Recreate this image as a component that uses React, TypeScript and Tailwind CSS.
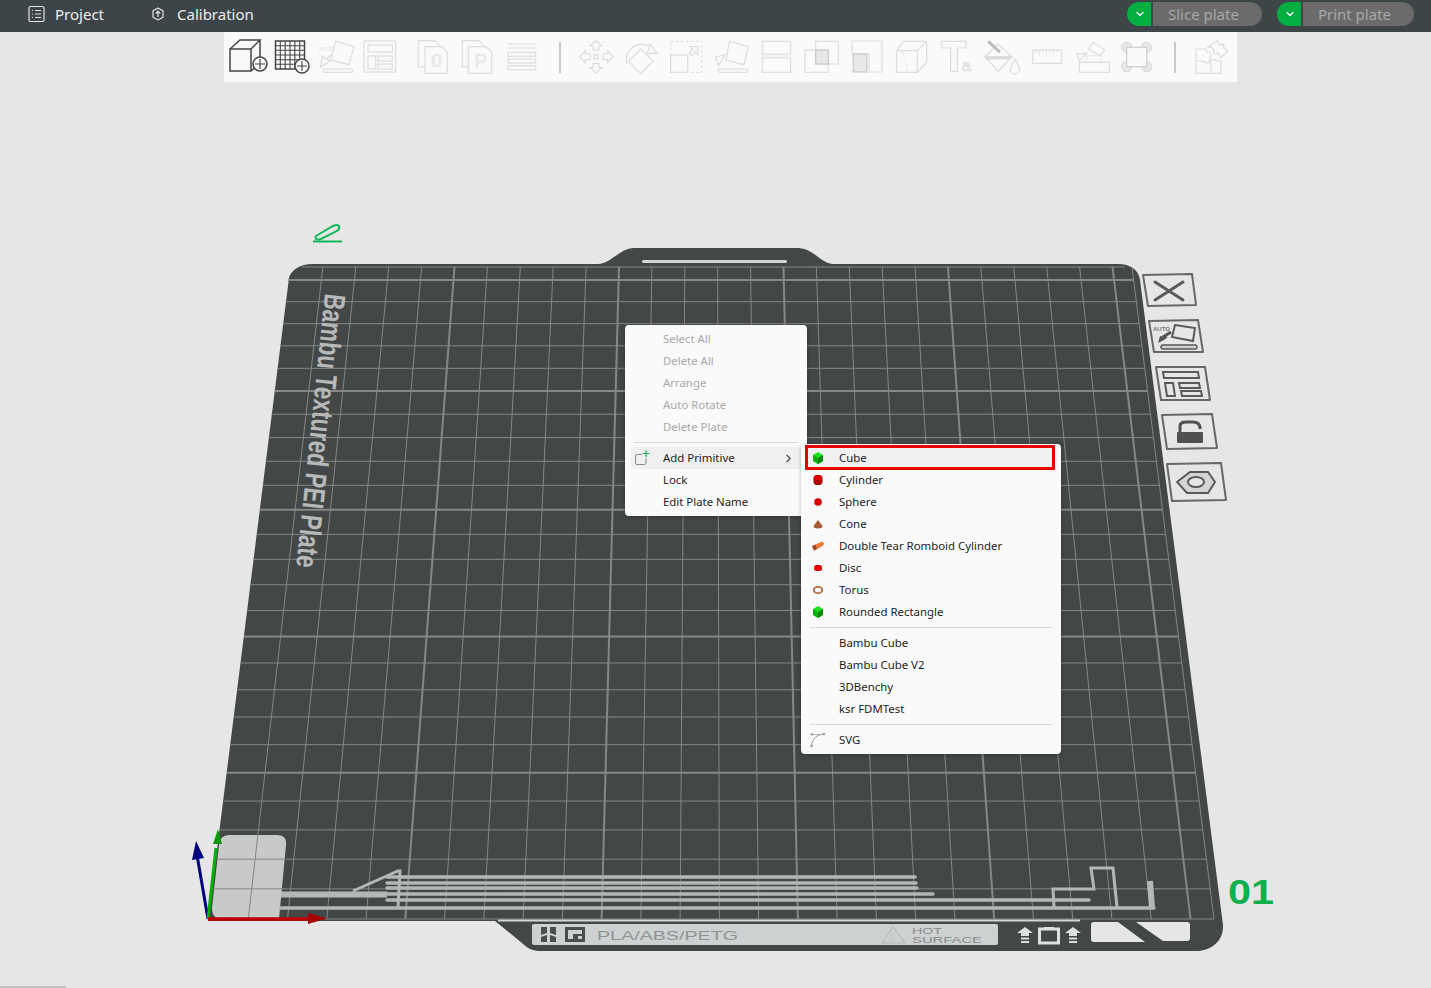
import type { ReactNode } from "react";
import { ChevronDown, ChevronRight } from "lucide-react";

const FONT = { fontFamily: '"Noto Sans", "Open Sans", sans-serif' };
const OFF = "#dcdcdc";
const DARK = "#444444";

// grid goes 25.6 cells each way (256mm plate), lines converge towards the top
const cellsX = Array.from({ length: 25 }, (_, i) => i + 1);
const cellsY = Array.from({ length: 25 }, (_, i) => i + 1);
const rowY = (k: number) => 919 - (30.38 * k) / (0.00755 * k + 1);

const FILAMENT = [
  [387, 915, 877],
  [387, 916, 883],
  [387, 917, 888],
  [387, 933, 894],
  [387, 1089, 900],
  [280, 1154, 908],
];

const Icon = ({ children }: { children: ReactNode }) => (
  <svg
    viewBox="0 0 44 46"
    className="h-[46px] w-[44px] shrink-0"
    fill="none"
    stroke={OFF}
    strokeWidth="1.2">
    {children}
  </svg>
);

const Hatch = ({ x, y, w, h }: { x: number; y: number; w: number; h: number }) => (
  <g>
    <rect x={x} y={y} width={w} height={h} fill="#f2f2f2" stroke="#c8c8c8" />
    {Array.from({ length: Math.floor((w + h) / 2.5) }, (_, i) => {
      const d = (i + 1) * 2.5;
      const x1 = x + Math.min(d, w);
      const y1 = y + Math.max(0, d - w);
      const x2 = x + Math.max(0, d - h);
      const y2 = y + Math.min(d, h);
      return <line key={i} x1={x1} y1={y1} x2={x2} y2={y2} stroke="#c6c6c6" strokeWidth="0.6" />;
    })}
  </g>
);

const Divider = ({ className }: { className: string }) => (
  <div className={`my-auto h-[31px] w-[2px] shrink-0 bg-[#c9c9c9] ${className}`} />
);

const Toolbar = () => (
  <div className="ml-[224px] flex h-[50px] w-[1013px] items-center bg-[#fafafa] pl-[2px]">
    <Icon>
      <g stroke={DARK} strokeWidth="1.5">
        <path d="M4 15H25V37H4ZM4 15L14 6H34L25 15M25 37L30 33M34 6V23" />
        <circle cx="34" cy="30" r="7" fill="#fafafa" />
        <path d="M29 30H39M34 25V35" strokeWidth="1.2" />
      </g>
    </Icon>
    <Icon>
      <g stroke={DARK} strokeWidth="1.1">
        <rect x="5.5" y="7" width="29" height="28" strokeWidth="1.5" />
        <path d="M10.3 7V35M15.2 7V35M20 7V35M24.8 7V35M29.7 7V35M5.5 11.7H34.5M5.5 16.3H34.5M5.5 21H34.5M5.5 25.7H34.5M5.5 30.3H34.5" />
        <circle cx="32" cy="32" r="7" fill="#fafafa" strokeWidth="1.4" />
        <path d="M27 32H37M32 27V37" />
      </g>
    </Icon>
    <Icon>
      <path d="M21.7 7L40 12.7L35 30.7L16.7 26Z" />
      <path d="M6.7 33L8 22L16 27Z" />
      <path d="M12 25L17 21" />
      <rect x="9.3" y="35" width="29.4" height="3.4" rx="1.7" />
      <text x="5" y="17" fontSize="5.5" fill={OFF} stroke="none" fontFamily="Liberation Sans">AUTO</text>
    </Icon>
    <Icon>
      <rect x="6" y="7" width="31.7" height="31" />
      <rect x="10" y="11" width="24.3" height="7" />
      <rect x="10" y="22" width="7.7" height="13" />
      <rect x="20" y="22" width="14.3" height="5" />
      <rect x="20" y="30" width="14.3" height="5" />
    </Icon>
    <div className="w-[9px] shrink-0" />
    <Icon>
      <path d="M14 33H7.3V6.7H24L29.7 12.7" />
      <path d="M14 12.7H31L36.3 18V39.3H14Z" fill="#fafafa" />
      <text x="25.5" y="33" fontSize="19" textAnchor="middle" strokeWidth="0.7" fontFamily="Liberation Sans">0</text>
    </Icon>
    <Icon>
      <path d="M13.3 33H7.3V6.7H24L29.7 12.7" />
      <path d="M13.3 12.7H31L36.7 18V39.3H13.3Z" fill="#fafafa" />
      <text x="25.5" y="33" fontSize="19" textAnchor="middle" strokeWidth="0.7" fontFamily="Liberation Sans">P</text>
    </Icon>
    <Icon>
      <path d="M9 10H36.7M9 14H36.7" />
      <rect x="9" y="18.3" width="27.7" height="4" />
      <rect x="9" y="25" width="27.7" height="4" />
      <rect x="9" y="31.7" width="27.7" height="4" />
    </Icon>
    <Divider className="ml-[16px] mr-[14px]" />
    <Icon>
      <rect x="19" y="20.7" width="4" height="4" />
      <path d="M21 6.7L27 12H24V16H18V12H15Z" />
      <path d="M21 39L27 33.7H24V29.7H18V33.7H15Z" />
      <path d="M5 22.7L10.3 16.7V19.7H15V25.7H10.3V28.7Z" />
      <path d="M38 22.7L32.7 16.7V19.7H28V25.7H32.7V28.7Z" />
    </Icon>
    <Icon>
      <path d="M21.7 15L34 27.3L21.7 39.6L9.4 27.3Z" />
      <path d="M7.7 30A15 16 0 0 1 29 12" />
      <path d="M31 10L38.3 19.3H28.3Z" />
    </Icon>
    <div className="w-[1px] shrink-0" />
    <Icon>
      <rect x="6.7" y="7.3" width="31" height="31" strokeDasharray="2.5 2.5" />
      <rect x="6.7" y="21" width="17" height="17.3" fill="#fafafa" />
      <path d="M34 12.7V20.5L31.3 17.8L27.5 21.5L25.3 19.3L29 15.5L26.3 12.7Z" />
    </Icon>
    <div className="w-[2px] shrink-0" />
    <Icon>
      <path d="M19.3 7.3L38.3 12.7L34 30.7L16 26Z" />
      <path d="M5.7 23L15 20.7L8.3 31.7Z" />
      <rect x="8.3" y="35" width="29.4" height="3.3" rx="1.6" />
    </Icon>
    <div className="w-[1px] shrink-0" />
    <Icon>
      <rect x="7.3" y="7.3" width="28.4" height="12.7" />
      <rect x="7.3" y="24" width="28.4" height="14.3" />
      <path d="M7.3 22H35.7" strokeDasharray="1 1" />
    </Icon>
    <div className="w-[1px] shrink-0" />
    <Icon>
      <rect x="5" y="16" width="23.3" height="22.3" />
      <rect x="15.7" y="7.3" width="22.6" height="22.7" />
      <Hatch x={15.7} y={16} w={12.6} h={14} />
    </Icon>
    <div className="w-[1px] shrink-0" />
    <Icon>
      <path d="M7 7H37V38H24V20H7Z" />
      <Hatch x={8.3} y={20} w={13.4} h={18} />
    </Icon>
    <div className="w-[1px] shrink-0" />
    <Icon>
      <path d="M6.7 16.7H27.3V38.3H6.7ZM6.7 16.7L13.3 7.3H36.7V28L27.3 38.3M27.3 16.7L36.7 7.3" />
      <path d="M12.7 18L18.3 37" strokeDasharray="1 1.5" />
    </Icon>
    <div className="w-[1px] shrink-0" />
    <Icon>
      <path d="M6.7 7.3H31V14H22.3V37.3H15.7V14H6.7Z" />
      <text x="31.5" y="37" fontSize="17" textAnchor="middle" strokeWidth="0.7" fontFamily="Liberation Sans">a</text>
    </Icon>
    <div className="w-[1px] shrink-0" />
    <Icon>
      <path d="M5 22.7L18.3 10L31.7 22.7L18.3 37.3Z" />
      <path d="M5 22.7H31.7L30 25H7Z" fill={OFF} />
      <path d="M8.3 7.3L20 18.3" stroke="#bdbdbd" strokeWidth="3" />
      <path d="M35 25C32 30 30.5 33 30.5 35.5A4.5 4.5 0 0 0 39.5 35.5C39.5 33 38 30 35 25Z" />
    </Icon>
    <div className="w-[1px] shrink-0" />
    <Icon>
      <rect x="7.7" y="16" width="29" height="13.3" />
      <path d="M11 16V19M14.5 16V21M18 16V19M21.5 16V21M25 16V19M28.5 16V21M32 16V19" strokeWidth="0.8" />
    </Icon>
    <div className="w-[1px] shrink-0" />
    <Icon>
      <rect x="9.3" y="28.3" width="30" height="10" />
      <rect x="16.7" y="21.7" width="15" height="6.6" strokeDasharray="1 1" />
      <path d="M18.3 15L23.3 8.3L35 16L30 21.7Z" />
      <path d="M6.7 20L16.7 19.3L9.3 26.7Z" />
    </Icon>
    <div className="w-[1px] shrink-0" />
    <Icon>
      <circle cx="11.7" cy="13.3" r="5" fill="#e8e8e8" />
      <circle cx="31.7" cy="13.3" r="5" fill="#e8e8e8" />
      <circle cx="11.7" cy="32.7" r="5" fill="#e8e8e8" />
      <circle cx="31.7" cy="32.7" r="5" fill="#e8e8e8" />
      <rect x="11.7" y="13.3" width="20" height="19.4" fill="#fafafa" stroke="#cfcfcf" />
    </Icon>
    <Divider className="ml-[15px] mr-[12px]" />
    <Icon>
      <path d="M8 15H18C17 17 19 19 21 18C23 19 24 21 22 23V27C25 25 29 25 28 27H33V39.3H8Z" />
      <path d="M8 27C12 25 13 29 16 27C17 30 20 30 22 27C22 31 25 33 22 39" />
      <path d="M19 14L29 6.7L32 11C35 9 37 11 35.5 13.5L40 17L33 23.5L30 19C27 21 24 19 26 16L23 13Z" />
    </Icon>
  </div>
);

const PlateButton = ({ points, children }: { points: string; children: ReactNode }) => (
  <g>
    <polygon points={points} fill="#e6e6e6" stroke="#686868" strokeWidth="2" strokeLinejoin="round" />
    {children}
  </g>
);

const Plate = () => (
  <svg viewBox="0 82 1431 906" className="absolute inset-0 h-full w-full">
    <path
      d="M313 264H598C606 264 612 258 620 253C626 249 630 248 636 248H796C804 248 808 250 814 254C820 258 826 264 834 264H1118C1130 264 1139 270 1140 280L1223 925C1224 940 1212 951 1196 951H541C533 951 528 949 522 943L495 921H208L289 278C291 270 300 264 313 264Z"
      fill="#434748"
    />
    <rect x="642" y="260" width="145" height="3" rx="1.5" fill="#d3d5d5" />

    {/* prime tower, sits under the grid lines */}
    <path d="M229 835H277Q287 835 286 845L279 919H222Q212 919 212 908L219 845Q220 835 229 835Z" fill="#c8caca" />

    {cellsX.map((i) => (
      <line
        key={i}
        x1={209 + 39.26 * i}
        y1="919"
        x2={290 + 32.9 * i}
        y2="267"
        stroke="#858885"
        strokeWidth={i % 5 === 0 ? 2 : 1}
      />
    ))}
    <line x1="1214" y1="919" x2="1132" y2="267" stroke="#858885" />
    <line x1="302" y1="267" x2="1125" y2="267" stroke="#858885" />
    <line x1="209" y1="919" x2="1214" y2="919" stroke="#858885" />
    {cellsY.map((k) => {
      const y = rowY(k);
      const left = 209 + ((919 - y) / 652) * 81;
      const right = 1214 - ((919 - y) / 652) * 82;
      return (
        <line
          key={k}
          x1={left}
          y1={y}
          x2={right}
          y2={y}
          stroke="#858885"
          strokeWidth={k % 5 === 0 ? 2 : 1}
        />
      );
    })}
    <line x1="498" y1="920.5" x2="1080" y2="920.5" stroke="#d5d7d7" strokeWidth="2" />

    <text
      transform="translate(325 293) rotate(96)"
      fontSize="30"
      fontWeight="700"
      fontFamily="Liberation Sans"
      fill="#b7b9b9"
      textLength="275"
      lengthAdjust="spacingAndGlyphs">
      Bambu Textured PEI Plate
    </text>

    {/* skirt and purge lines */}
    <g stroke="#b5b7b5" fill="none">
      {FILAMENT.map(([x1, x2, y]) => (
        <line key={y} x1={x1} y1={y} x2={x2} y2={y} strokeWidth="3.5" strokeLinecap="round" />
      ))}
      <line x1="281" y1="894.5" x2="387" y2="894.5" strokeWidth="6" />
      <path d="M353 891L398 871L400 871L398 907" strokeWidth="3" />
      <path d="M1054 907L1053 889H1094L1091 868H1113L1117 907" strokeWidth="3" />
      <line x1="1150" y1="881" x2="1152" y2="908" strokeWidth="6" />
    </g>

    {/* axes */}
    <path d="M208 919L197 855" stroke="#00007f" strokeWidth="3" />
    <path d="M196 841L204 858L192 860Z" fill="#00007f" />
    <path d="M208 919L216 848" stroke="#00b000" strokeWidth="3" />
    <path d="M218 829L222 844L213 844Z" fill="#0a9a0a" />
    <path d="M208 919H312" stroke="#c00000" strokeWidth="3.5" />
    <path d="M327 918.5L308 913V924Z" fill="#a80000" />

    {/* label strip */}
    <rect x="532" y="924" width="466" height="21" rx="2" fill="#ced1d1" />
    <g fill="#4a4d4e">
      <path d="M541 927H547V933L541 935ZM550 927H556V935L550 933ZM541 937L547 935V942H541ZM550 935L556 937V942H550Z" />
      <path fillRule="evenodd" d="M565 927H585V942H565ZM568 930V939H573V934H582V930ZM578 936V939H582V936Z" />
    </g>
    <text x="597" y="940" fontSize="13.5" fontFamily="Liberation Sans" fill="#8f9393" textLength="141" lengthAdjust="spacingAndGlyphs">
      PLA/ABS/PETG
    </text>
    <path d="M882 943L893 927L905 943Z" fill="none" stroke="#b0b3b3" />
    <path d="M891 933V941M894 933V941" stroke="#bcbfbf" />
    <text x="912" y="933.5" fontSize="8.5" fontFamily="Liberation Sans" fill="#85898a" textLength="30" lengthAdjust="spacingAndGlyphs">
      HOT
    </text>
    <text x="912" y="942.5" fontSize="8.5" fontFamily="Liberation Sans" fill="#85898a" textLength="70" lengthAdjust="spacingAndGlyphs">
      SURFACE
    </text>
    <g fill="#dfe1e1">
      <path d="M1025 927L1033 933H1029V936H1021V933H1017Z" />
      <path d="M1021 937.5H1029V939.5H1021ZM1021 941H1029V943H1021Z" />
      <path d="M1073 927L1081 933H1077V936H1069V933H1065Z" />
      <path d="M1069 937.5H1077V939.5H1069ZM1069 941H1077V943H1069Z" />
    </g>
    <rect x="1039.5" y="929" width="19" height="14" fill="none" stroke="#dfe1e1" strokeWidth="3" />
    <path d="M1044 927.5H1054" stroke="#dfe1e1" />
    <path d="M1094 922H1118L1145 942H1094Q1091 942 1091 939V925Q1091 922 1094 922Z" fill="#e6e6e6" />
    <path d="M1136 922H1187Q1190 922 1190 925V938Q1190 941 1187 941H1163Z" fill="#e6e6e6" />

    {/* plate buttons */}
    <PlateButton points="1143,275 1192,274 1196,305 1148,306">
      <path d="M1155 282L1183 300M1183 282L1155 300" stroke="#5a5a5a" strokeWidth="3" strokeLinecap="round" />
    </PlateButton>
    <PlateButton points="1149,321 1198,320 1203,352 1154,352">
      <path d="M1175 325L1195 328L1193 341L1172 337Z" fill="none" stroke="#5a5a5a" strokeWidth="2" />
      <rect x="1161" y="345" width="36" height="4" rx="2" fill="#cfcfcf" stroke="#5a5a5a" strokeWidth="1.5" />
      <text x="1153" y="331" fontSize="6" fontWeight="700" fontFamily="Liberation Sans" fill="#777">AUTO</text>
      <path d="M1158 343L1160 336L1168 337L1164 340Z" fill="#555" />
      <path d="M1163 337L1171 332" stroke="#555" strokeWidth="3" />
    </PlateButton>
    <PlateButton points="1156,367 1205,367 1210,400 1161,400">
      <g fill="none" stroke="#5a5a5a" strokeWidth="2">
        <path d="M1163 372H1198L1199 378H1164Z" />
        <path d="M1165 383H1173L1175 396H1167Z" />
        <path d="M1179 383H1199L1200 388H1180Z" />
        <path d="M1181 391H1201L1202 396H1182Z" />
      </g>
    </PlateButton>
    <PlateButton points="1162,415 1212,414 1217,448 1167,449">
      <rect x="1177" y="432" width="26" height="11" rx="1" fill="#505050" />
      <path d="M1180 432V426Q1180 422 1186 422H1193Q1199 422 1200 427V429" fill="none" stroke="#505050" strokeWidth="3" />
    </PlateButton>
    <PlateButton points="1167,464 1221,463 1226,500 1172,501">
      <path d="M1177 482L1190 472H1208L1215 482L1208 493H1187Z" fill="#d5d5d5" stroke="#5a5a5a" strokeWidth="2" />
      <ellipse cx="1196" cy="482" rx="8" ry="5" fill="#e6e6e6" stroke="#5a5a5a" strokeWidth="2" />
    </PlateButton>

    {/* plate number and rename pencil */}
    <text x="1228" y="904" fontSize="35" fontWeight="700" fontFamily="Liberation Sans" fill="#10b04f" textLength="46" lengthAdjust="spacingAndGlyphs">
      01
    </text>
    <path d="M316 236L333 226Q337 224 339 226Q340 229 337 231L321 239Q317 240 316 239Q315 237 316 236Z" fill="none" stroke="#14b85a" strokeWidth="2" />
    <path d="M313 241.5H342" stroke="#14b85a" strokeWidth="2" />
  </svg>
);

const MenuRow = ({
  label,
  muted,
  active,
  icon,
  right,
}: {
  label: string;
  muted?: boolean;
  active?: boolean;
  icon?: ReactNode;
  right?: ReactNode;
}) => (
  <div
    className={`flex h-[22px] items-center rounded-[3px] ${active ? "bg-[#f0f0f0]" : ""} ${
      muted ? "text-[#a8a8a8]" : "text-[#1c1c1c]"
    }`}>
    <span className="mr-[10px] flex w-[22px] shrink-0 items-center justify-center">{icon}</span>
    <span className="grow whitespace-nowrap">{label}</span>
    {right}
  </div>
);

const Separator = () => <div className="mx-[3px] my-[4px] h-[1px] bg-[#d8d8d8]" />;

const Hex = ({ light, dark }: { light: string; dark: string }) => (
  <svg viewBox="0 0 12 12" className="h-3 w-3">
    <path d="M6 0L11 3V9L6 12L1 9V3Z" fill={light} />
    <path d="M6 6L11 3V9L6 12Z" fill={dark} />
    <path d="M6 6L1 3V9L6 12Z" fill={dark} opacity="0.6" />
  </svg>
);

const PRIMITIVES: { label: string; icon: ReactNode }[] = [
  { label: "Cube", icon: <Hex light="#1fe01f" dark="#078a07" /> },
  {
    label: "Cylinder",
    icon: (
      <svg viewBox="0 0 12 12" className="h-3 w-3">
        <rect x="1.5" y="1" width="9" height="10" rx="3.5" fill="#b00000" />
        <ellipse cx="6" cy="3.5" rx="4" ry="2.5" fill="#e00000" />
      </svg>
    ),
  },
  {
    label: "Sphere",
    icon: (
      <svg viewBox="0 0 12 12" className="h-3 w-3">
        <circle cx="6" cy="6" r="3.8" fill="#d40000" />
      </svg>
    ),
  },
  {
    label: "Cone",
    icon: (
      <svg viewBox="0 0 12 12" className="h-3 w-3">
        <path d="M6 2L10.5 8Q10.5 10.5 6 10.5Q1.5 10.5 1.5 8Z" fill="#a85c35" />
      </svg>
    ),
  },
  {
    label: "Double Tear Romboid Cylinder",
    icon: (
      <svg viewBox="0 0 14 12" className="h-3 w-[14px]">
        <path d="M1 6L11 1.5L13.5 3.5L11 6.5L3 10.5Z" fill="#f07a3a" />
        <path d="M1 6L3 10.5L6 9L4.5 5Z" fill="#9a4a25" />
      </svg>
    ),
  },
  {
    label: "Disc",
    icon: (
      <svg viewBox="0 0 12 12" className="h-3 w-3">
        <rect x="2" y="3" width="8" height="6" rx="2.5" fill="#e80000" />
      </svg>
    ),
  },
  {
    label: "Torus",
    icon: (
      <svg viewBox="0 0 12 12" className="h-3 w-3">
        <ellipse cx="6" cy="6" rx="4.2" ry="3.2" fill="none" stroke="#b06a40" strokeWidth="1.8" />
      </svg>
    ),
  },
  { label: "Rounded Rectangle", icon: <Hex light="#1fe01f" dark="#078a07" /> },
];

const MODELS = ["Bambu Cube", "Bambu Cube V2", "3DBenchy", "ksr FDMTest"];

const PlateMenu = () => (
  <div className="absolute left-[625px] top-[243px] w-[182px] rounded-[4px] bg-[#fafafa] px-[6px] py-[3px] text-[11.4px] shadow-[0_1px_4px_rgba(0,0,0,0.25)]">
    {["Select All", "Delete All", "Arrange", "Auto Rotate", "Delete Plate"].map((label) => (
      <MenuRow key={label} label={label} muted />
    ))}
    <Separator />
    <MenuRow
      label="Add Primitive"
      active
      icon={
        <svg viewBox="0 0 16 16" className="h-4 w-4">
          <rect x="1.5" y="4.5" width="10.5" height="10" rx="1.5" fill="none" stroke="#8a8a8a" />
          <rect x="8" y="0" width="8" height="8" fill="#f0f0f0" />
          <path d="M12 0.5V7M8.5 3.5H15.5" stroke="#10b04f" strokeWidth="1.2" />
        </svg>
      }
      right={<ChevronRight className="mr-[6px] h-[13px] w-[13px] text-[#444]" />}
    />
    <MenuRow label="Lock" />
    <MenuRow label="Edit Plate Name" />
  </div>
);

const PrimitiveMenu = () => (
  <div className="absolute left-[801px] top-[362px] w-[260px] rounded-[4px] bg-[#fafafa] px-[6px] py-[3px] text-[11.4px] shadow-[0_1px_4px_rgba(0,0,0,0.25)]">
    {PRIMITIVES.map((item, index) => (
      <MenuRow key={item.label} label={item.label} active={index === 0} icon={item.icon} />
    ))}
    <Separator />
    {MODELS.map((label) => (
      <MenuRow key={label} label={label} />
    ))}
    <Separator />
    <MenuRow
      label="SVG"
      icon={
        <svg viewBox="0 0 16 16" className="h-4 w-4" fill="none" stroke="#9a9a9a">
          <path d="M1.5 14C2 7 7 2.5 14 2" />
          <path d="M2 2.5H10" strokeWidth="0.7" />
          <circle cx="1.8" cy="2.3" r="1" />
          <circle cx="14" cy="2" r="1" />
          <circle cx="1.5" cy="14" r="1" />
        </svg>
      }
    />
    {/* red annotation from the screenshot */}
    <div className="absolute left-[4px] top-[1px] h-[25px] w-[250px] border-[3px] border-[#e60000]" />
  </div>
);

const ActionButton = ({ label }: { label: string }) => (
  <div className="flex h-6 items-center gap-[2px]">
    <span className="flex h-6 w-6 items-center justify-center rounded-l-full bg-[#00ae42] pl-[2px]">
      <ChevronDown className="h-3 w-3 text-white" strokeWidth={2.5} />
    </span>
    <span className="flex h-6 items-center rounded-r-full bg-[#6b6b6b] pl-[15px] pr-[23px] text-[15px] text-[#a8a8a8]">
      {label}
    </span>
  </div>
);

const TopBar = () => (
  <div className="flex h-8 shrink-0 items-center justify-between bg-[#3e4548] pb-[4px] text-[15px] text-[#eeeeee]">
    <div className="ml-[28px] flex items-center">
      <svg viewBox="0 0 18 18" className="h-[18px] w-[18px]" fill="none" stroke="#e4e4e4" strokeWidth="1.2">
        <rect x="1" y="1.5" width="15" height="15" rx="1.5" />
        <path d="M4 5.5H5M7 5.5H13M4 9H5M7 9H13M4 12.5H5M7 12.5H13" />
      </svg>
      <span className="ml-[9px]">Project</span>
      <svg viewBox="0 0 14 14" className="ml-[47px] h-[14px] w-[14px]" fill="none" stroke="#e4e4e4" strokeWidth="1.2">
        <path d="M7 1L12 3.7V10.3L7 13L2 10.3V3.7Z" strokeLinejoin="round" />
        <path d="M7 10V4.5M4.8 6.5L7 4.2L9.2 6.5" />
      </svg>
      <span className="ml-[12px]">Calibration</span>
    </div>
    <div className="mr-[17px] flex items-center gap-[15px]">
      <ActionButton label="Slice plate" />
      <ActionButton label="Print plate" />
    </div>
  </div>
);

export default function App() {
  return (
    <div className="flex h-screen flex-col overflow-hidden bg-[#e6e6e6]" style={FONT}>
      <TopBar />
      <Toolbar />
      <div className="relative grow">
        <Plate />
        <PlateMenu />
        <PrimitiveMenu />
        <div className="absolute bottom-0 left-0 h-[2px] w-[66px] bg-[#c4c4c4]" />
      </div>
    </div>
  );
}
